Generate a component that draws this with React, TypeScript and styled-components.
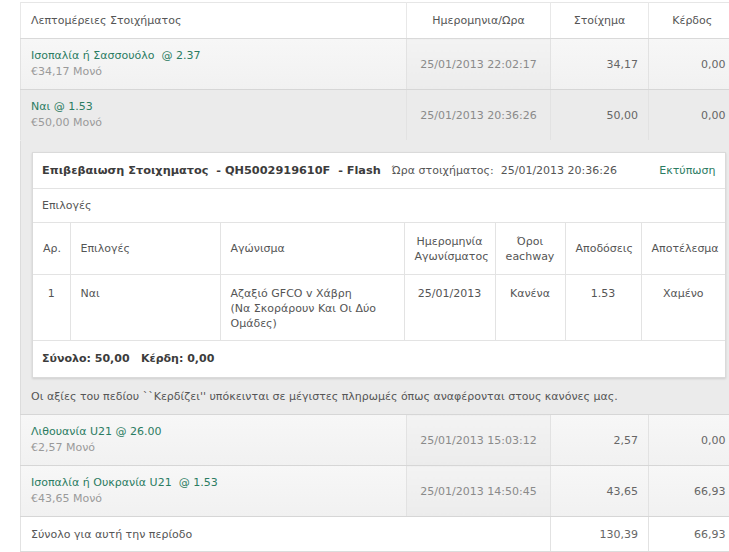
import styled, { createGlobalStyle } from 'styled-components';
import { Fragment } from 'react';

const GlobalStyle = createGlobalStyle`
  html, body {
    margin: 0;
    padding: 0;
    background: #ffffff;
    overflow: hidden;
  }
  body {
    font-family: 'DejaVu Sans', Verdana, sans-serif;
    font-size: 11px;
    color: #555;
  }
`;

const GREEN = '#2b7c62';

interface Bet {
  selection: string;
  stake: string;
  date: string;
  amount: string;
  profit: string;
  open?: boolean;
}

const bets: Bet[] = [
  {
    selection: 'Ισοπαλία ή Σασσουόλο\u00a0 @ 2.37',
    stake: '€34,17 Μονό',
    date: '25/01/2013 22:02:17',
    amount: '34,17',
    profit: '0,00',
  },
  {
    selection: 'Ναι @ 1.53',
    stake: '€50,00 Μονό',
    date: '25/01/2013 20:36:26',
    amount: '50,00',
    profit: '0,00',
    open: true,
  },
  {
    selection: 'Λιθουανία U21 @ 26.00',
    stake: '€2,57 Μονό',
    date: '25/01/2013 15:03:12',
    amount: '2,57',
    profit: '0,00',
  },
  {
    selection: 'Ισοπαλία ή Ουκρανία U21\u00a0 @ 1.53',
    stake: '€43,65 Μονό',
    date: '25/01/2013 14:50:45',
    amount: '43,65',
    profit: '66,93',
  },
];

function BetDetails() {
  return (
    <DetailRow>
      <DetailCell colSpan={4}>
        <Panel>
          <PanelTitle>
            <TitleText>
              <strong>Επιβεβαιωση Στοιχηματος&nbsp; - QH5002919610F&nbsp; - Flash</strong>
              <TimeLabel>Ώρα στοιχήματος:&nbsp; 25/01/2013 20:36:26</TimeLabel>
            </TitleText>
            <PrintLink>Εκτύπωση</PrintLink>
          </PanelTitle>
          <PanelSub>Επιλογές</PanelSub>
          <InnerTable>
            <colgroup>
              <col style={{ width: 37 }} />
              <col style={{ width: 150 }} />
              <col style={{ width: 184 }} />
              <col style={{ width: 91 }} />
              <col style={{ width: 70 }} />
              <col style={{ width: 76 }} />
              <col style={{ width: 84 }} />
            </colgroup>
            <thead>
              <tr>
                <InnerHead>Αρ.</InnerHead>
                <InnerHead>Επιλογές</InnerHead>
                <InnerHead>Αγώνισμα</InnerHead>
                <InnerHead $center>Ημερομηνία<br />Αγωνίσματος</InnerHead>
                <InnerHead $center>Όροι<br />eachway</InnerHead>
                <InnerHead $center>Αποδόσεις</InnerHead>
                <InnerHead $center>Αποτέλεσμα</InnerHead>
              </tr>
            </thead>
            <tbody>
              <tr>
                <InnerCell $center>1</InnerCell>
                <InnerCell>Ναι</InnerCell>
                <InnerCell>
                  Αζαξιό GFCO v Χάβρη<br />(Να Σκοράρουν Και Οι Δύο<br />Ομάδες)
                </InnerCell>
                <InnerCell $center>25/01/2013</InnerCell>
                <InnerCell $center>Κανένα</InnerCell>
                <InnerCell $center>1.53</InnerCell>
                <InnerCell $center>Χαμένο</InnerCell>
              </tr>
            </tbody>
          </InnerTable>
          <PanelTotal>Σύνολο: 50,00&nbsp;&nbsp; Κέρδη: 0,00</PanelTotal>
        </Panel>
        <Note>
          Οι αξίες του πεδίου ``Κερδίζει'' υπόκεινται σε μέγιστες πληρωμές όπως αναφέρονται στους κανόνες μας.
        </Note>
      </DetailCell>
    </DetailRow>
  );
}

export default function App() {
  return (
    <>
      <GlobalStyle />
      <Page>
        <Table>
          <colgroup>
            <col style={{ width: 386 }} />
            <col style={{ width: 144 }} />
            <col style={{ width: 98 }} />
            <col style={{ width: 87 }} />
          </colgroup>
          <thead>
            <tr>
              <HeadCell>Λεπτομέρειες Στοιχήματος</HeadCell>
              <HeadCell $align="center">Ημερομηνια/Ωρα</HeadCell>
              <HeadCell $align="center">Στοίχημα</HeadCell>
              <HeadCell $align="center">Κέρδος</HeadCell>
            </tr>
          </thead>
          <tbody>
            {bets.map((bet) => (
              <Fragment key={bet.date}>
                <BetRow $open={bet.open}>
                  <Cell>
                    <Selection>{bet.selection}</Selection>
                    <Stake>{bet.stake}</Stake>
                  </Cell>
                  <DateCell $open={bet.open}>{bet.date}</DateCell>
                  <NumCell>{bet.amount}</NumCell>
                  <NumCell>{bet.profit}</NumCell>
                </BetRow>
                {bet.open && <BetDetails />}
              </Fragment>
            ))}
            <TotalRow>
              <Cell colSpan={2}>Σύνολο για αυτή την περίοδο</Cell>
              <NumCell>130,39</NumCell>
              <NumCell>66,93</NumCell>
            </TotalRow>
          </tbody>
        </Table>
      </Page>
    </>
  );
}

const Page = styled.div`
  padding: 2px 0 0 20px;
  width: 740px;
`;

const Table = styled.table`
  width: 715px;
  table-layout: fixed;
  border-collapse: collapse;
  border-top: 1px solid #e6e6e6;
  border-left: 1px solid #dcdcdc;
`;

const HeadCell = styled.th<{ $align?: string }>`
  height: 35px;
  padding: 0 10px;
  font-weight: normal;
  color: #555;
  text-align: ${({ $align }) => $align || 'left'};
  background: #fff;
  border-left: 1px solid #e8e8e8;
  border-bottom: 1px solid #d9d9d9;
`;

const BetRow = styled.tr<{ $open?: boolean }>`
  background: ${({ $open }) =>
    $open ? '#ebebeb' : 'linear-gradient(#f7f7f7, #f1f1f1)'};
  & > td {
    border-bottom: 1px solid ${({ $open }) => ($open ? '#ebebeb' : '#d6d6d6')};
  }
`;

const Cell = styled.td`
  height: 50px;
  padding: 0 10px;
  vertical-align: middle;
  border-left: 1px solid #e2e2e2;
`;

const Selection = styled.div`
  color: ${GREEN};
  line-height: 16px;
`;

const Stake = styled.div`
  color: #9a9a9a;
  line-height: 16px;
`;

const DateCell = styled(Cell)<{ $open?: boolean }>`
  text-align: center;
  color: #8a8a8a;
  background: ${({ $open }) =>
    $open ? 'transparent' : 'linear-gradient(#f3f3f3, #ececec)'};
`;

const NumCell = styled(Cell)`
  text-align: right;
  color: #666;
`;

const TotalRow = styled.tr`
  background: #fff;
  & > td {
    height: 34px;
    border-bottom: 1px solid #dcdcdc;
    background: #fff;
  }
`;

const DetailRow = styled.tr`
  background: #ebebeb;
  & > td {
    border-bottom: 1px solid #d6d6d6;
  }
`;

const DetailCell = styled.td`
  padding: 11px 10px 0 11px;
  vertical-align: top;
`;

const Panel = styled.div`
  background: #fff;
  border: 1px solid #dadada;
  box-shadow: 0 1px 2px rgba(0, 0, 0, 0.12);
`;

const PanelTitle = styled.div`
  display: flex;
  align-items: center;
  justify-content: space-between;
  height: 35px;
  padding: 0 9px 0 9px;
  border-bottom: 1px solid #e3e3e3;
`;

const TitleText = styled.div`
  color: #444;
  white-space: nowrap;
  strong {
    font-size: 11.3px;
    font-weight: bold;
    color: #3c3c3c;
  }
`;

const TimeLabel = styled.span`
  margin-left: 11px;
  font-size: 11px;
  color: #555;
`;

const PrintLink = styled.span`
  color: ${GREEN};
`;

const PanelSub = styled.div`
  height: 33px;
  line-height: 33px;
  padding: 0 9px;
  color: #555;
  border-bottom: 1px solid #e3e3e3;
`;

const InnerTable = styled.table`
  width: 100%;
  table-layout: fixed;
  border-collapse: collapse;
`;

const InnerHead = styled.th<{ $center?: boolean }>`
  height: 51px;
  padding: 0 10px;
  font-weight: normal;
  line-height: 15px;
  color: #555;
  text-align: ${({ $center }) => ($center ? 'center' : 'left')};
  border-left: 1px solid #e3e3e3;
  border-bottom: 1px solid #e3e3e3;
  &:first-child {
    border-left: none;
  }
`;

const InnerCell = styled.td<{ $center?: boolean }>`
  height: 66px;
  padding: 11px 10px 0;
  vertical-align: top;
  line-height: 15px;
  color: #555;
  text-align: ${({ $center }) => ($center ? 'center' : 'left')};
  border-left: 1px solid #e3e3e3;
  border-bottom: 1px solid #e3e3e3;
  box-sizing: border-box;
  &:first-child {
    border-left: none;
  }
`;

const PanelTotal = styled.div`
  height: 36px;
  line-height: 36px;
  padding: 0 9px;
  font-weight: bold;
  color: #3c3c3c;
`;

const Note = styled.div`
  height: 36px;
  line-height: 38px;
  margin-left: -1px;
  color: #555;
  white-space: nowrap;
`;
